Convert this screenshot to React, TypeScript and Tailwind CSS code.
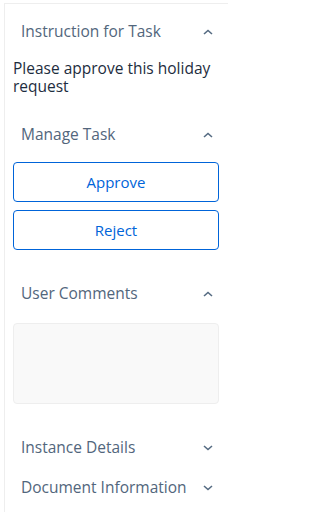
import React from "react";

function Chevron({ up }: { up: boolean }) {
  return (
    <svg width="10" height="6" viewBox="0 0 10 6" className="text-[#556b82]">
      {up ? (
        <polyline points="1,5 5,1.5 9,5" fill="none" stroke="currentColor" strokeWidth="1.6" />
      ) : (
        <polyline points="1,1 5,4.5 9,1" fill="none" stroke="currentColor" strokeWidth="1.6" />
      )}
    </svg>
  );
}

function Header({ title, open }: { title: string; open: boolean }) {
  return (
    <div className="flex h-10 items-center justify-between pl-2 pr-[6px]">
      <span className="text-[15.5px] text-[#52667c]">{title}</span>
      <Chevron up={open} />
    </div>
  );
}

export default function App() {
  return (
    <div className="min-h-[512px] w-[228px] overflow-hidden bg-white pl-[4px] pt-[3px]" style={{ fontFamily: "'Open Sans', 'Noto Sans', sans-serif" }}>
      <div className="min-h-[509px] border-l border-t border-[#eeeeee] pl-2 pr-[9px] pt-[8px]">
        <section>
          <Header title="Instruction for Task" open />
          <p className="mt-[7px] text-[15.5px] leading-[18px] text-[#1d2d3e]">Please approve this holiday request</p>
        </section>

        <section className="mt-[20px]">
          <Header title="Manage Task" open />
          <div className="mt-[7px] flex flex-col gap-2">
            <button className="h-10 rounded border border-[#0064d9] text-[15px] text-[#0064d9]">Approve</button>
            <button className="h-10 rounded border border-[#0064d9] text-[15px] text-[#0064d9]">Reject</button>
          </div>
        </section>

        <section className="mt-[24px]">
          <Header title="User Comments" open />
          <div className="mt-[9px] h-[81px] rounded border border-[#eeeeee] bg-[#f9f9f9]" />
        </section>

        <section className="mt-6">
          <Header title="Instance Details" open={false} />
          <Header title="Document Information" open={false} />
        </section>
      </div>
    </div>
  );
}
